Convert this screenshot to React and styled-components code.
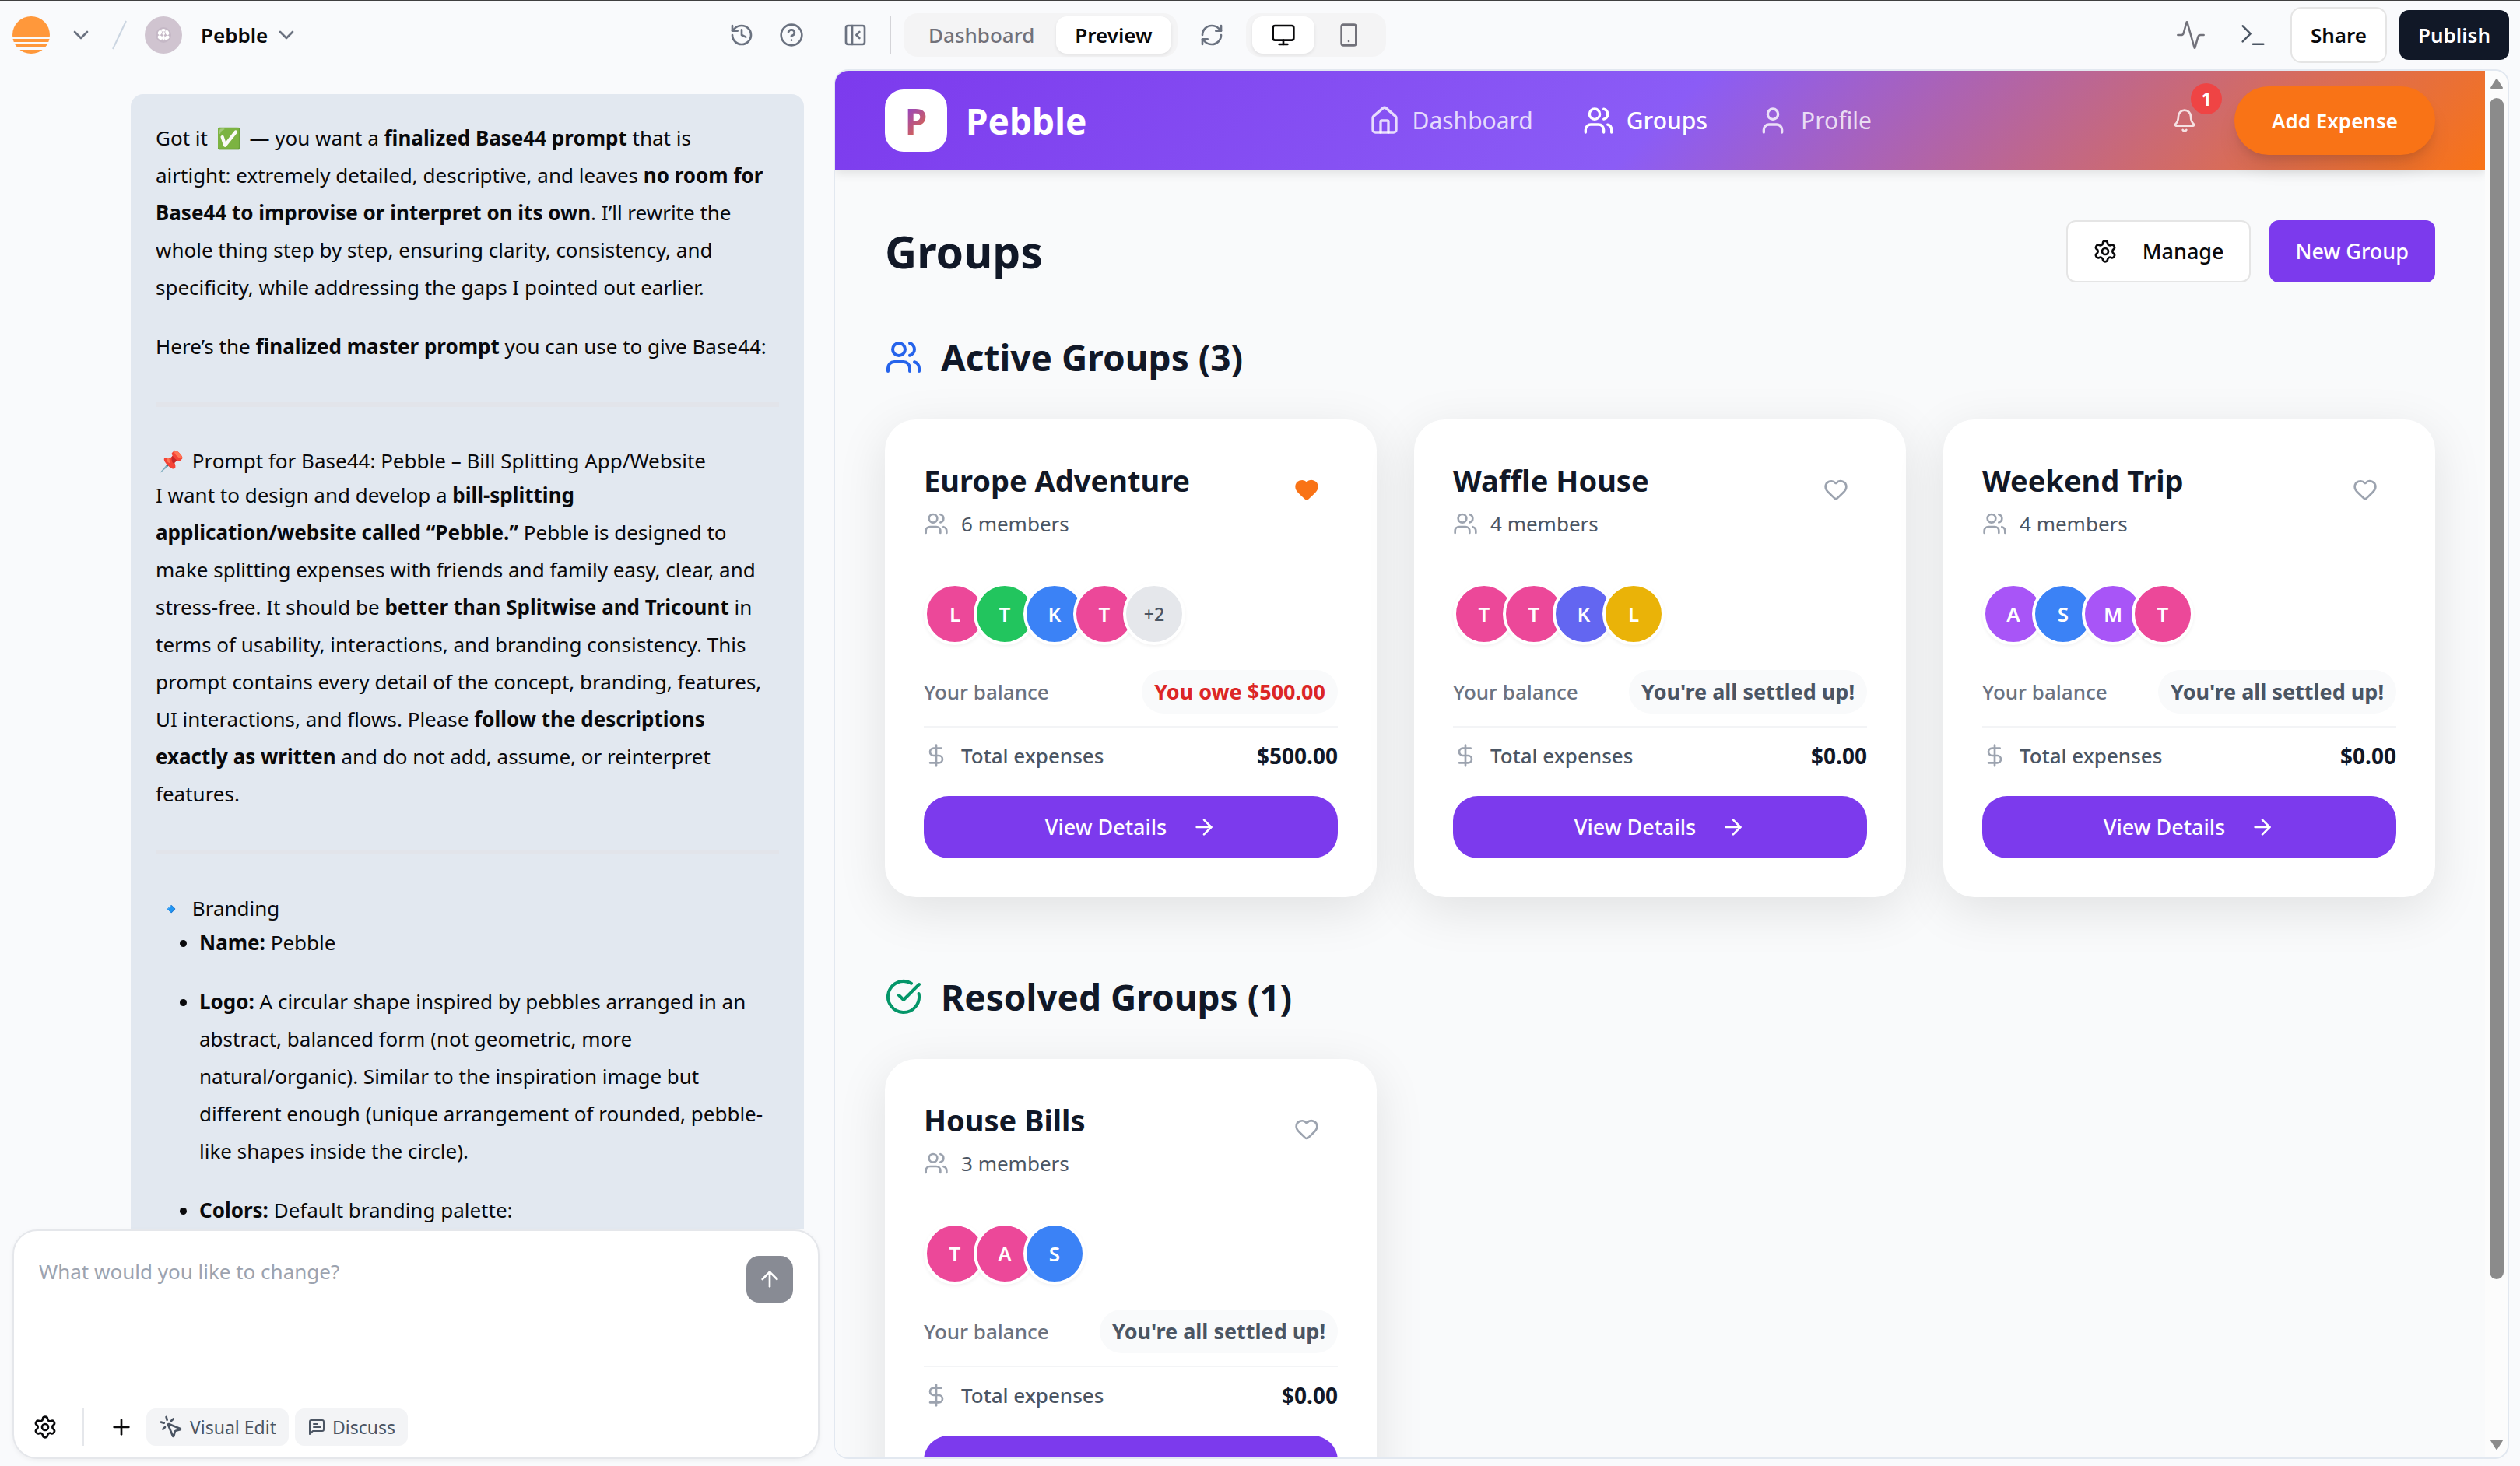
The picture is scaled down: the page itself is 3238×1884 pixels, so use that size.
import React from "react";
import styled, { createGlobalStyle, css } from "styled-components";
import {
  Activity,
  ArrowRight,
  ArrowUp,
  Bell,
  ChevronDown,
  CircleCheckBig,
  CircleHelp,
  DollarSign,
  Heart,
  History,
  House,
  Monitor,
  MousePointerClick,
  PanelLeftClose,
  Plus,
  RefreshCw,
  Settings,
  Smartphone,
  Terminal,
  User,
  Users,
} from "lucide-react";

const GlobalStyle = createGlobalStyle`
  * {
    box-sizing: border-box;
  }
  body {
    margin: 0;
    background: #f9fafc;
    color: #09090b;
    font-family: "Noto Sans", "Open Sans", sans-serif;
    font-size: 26px;
    line-height: 40px;
  }
  h1, h2, h3, p, ul {
    margin: 0;
    padding: 0;
  }
  button, textarea {
    font: inherit;
    color: inherit;
    border: 0;
    padding: 0;
    background: none;
  }
  button {
    cursor: pointer;
  }
  a {
    color: inherit;
    text-decoration: none;
  }
  svg {
    flex-shrink: 0;
  }
`;

/* ---------- shell ---------- */

const Page = styled.div`
  display: flex;
  flex-direction: column;
  height: 100vh;
  overflow: hidden;
`;

const Columns = styled.div`
  display: grid;
  grid-template-columns: minmax(0, 1072fr) minmax(0, 2166fr);
`;

const TopBar = styled(Columns)`
  flex-shrink: 0;
  height: 89px;
  border-top: 1px solid #404040;
`;

const Body = styled(Columns)`
  flex: 1;
  min-height: 0;
`;

const BarSide = styled.div`
  display: flex;
  align-items: center;
`;

const BarLeft = styled(BarSide)`
  padding: 0 39px 0 16px;
`;

const BarRight = styled(BarSide)`
  padding: 0 14px 0 11px;
`;

const Spacer = styled.div`
  flex: 1;
`;

const IconButton = styled.button`
  display: flex;
  align-items: center;
  justify-content: center;
  width: ${(p) => p.$size || 32}px;
  height: ${(p) => p.$size || 32}px;
  color: ${(p) => p.$color || "#6b7280"};
`;

const HelpButton = styled(IconButton)`
  margin-left: 32px;
`;

const HomeLink = styled.a`
  display: flex;
  margin-right: 24px;
`;

const Slash = styled.svg`
  margin: 0 20px;
`;

const ProjectName = styled.button`
  display: flex;
  align-items: center;
  gap: 8px;
  font-weight: 600;
`;

const NameLabel = styled.span`
  padding-left: 24px;
`;

const Divider = styled.span`
  width: 2px;
  height: 48px;
  background: ${(p) => p.$color || "#d4d4d8"};
`;

const BarDivider = styled(Divider)`
  margin: 0 16px 0 28px;
`;

const Segment = styled.div`
  display: flex;
  align-items: center;
  gap: 4px;
  height: 56px;
  padding: 4px 8px;
  border-radius: 18px;
  background: #f4f4f5;
`;

const SegmentButton = styled.button`
  display: flex;
  align-items: center;
  justify-content: center;
  height: 48px;
  padding: 0 24px;
  border-radius: 14px;
  font-weight: 500;
  color: #71717a;
  ${(p) =>
    p.$active &&
    css`
      color: #09090b;
      background: #ffffff;
      box-shadow: 0 2px 4px rgba(0, 0, 0, 0.08);
      font-weight: 600;
    `}
`;

const RefreshButton = styled(IconButton)`
  margin: 0 28px;
`;

const BarActions = styled.div`
  display: flex;
  align-items: center;
  gap: 40px;
  margin-right: 28px;
`;

const ShareButton = styled.button`
  height: 72px;
  padding: 0 24px;
  border: 2px solid #e5e5e5;
  border-radius: 14px;
  background: #ffffff;
  font-weight: 600;
`;

const PublishButton = styled.button`
  height: 64px;
  margin-left: 16px;
  padding: 0 24px;
  border-radius: 12px;
  background: #111827;
  color: #ffffff;
  font-weight: 600;
`;

/* ---------- chat ---------- */

const ChatColumn = styled.section`
  display: flex;
  flex-direction: column;
  min-height: 0;
`;

const ChatScroll = styled.div`
  flex: 1;
  min-height: 0;
  overflow: hidden;
  padding: 32px 39px 0 168px;
`;

const Bubble = styled.div`
  padding: 32px;
  border-radius: 16px;
  background: #e2e8f0;
  color: #09090b;
  line-height: 48px;
`;

const Paragraph = styled.p`
  padding-right: 12px;

  & + & {
    margin-top: 28px;
  }
`;

const BubbleHeading = styled.h1`
  font-size: 26px;
  font-weight: 400;
  line-height: 40px;
`;

const Rule = styled.hr`
  height: 6px;
  margin: 48px 0 49px;
  border: 0;
  background: #e2e4ea;
`;

const Emoji = styled.span`
  display: inline-block;
  width: 40px;
  text-align: center;
`;

const List = styled.ul`
  padding-left: 56px;

  li + li {
    margin-top: 28px;
  }
`;

const Composer = styled.form`
  display: flex;
  flex-direction: column;
  flex-shrink: 0;
  margin: 0 19px 9px 16px;
  padding: 32px 32px 15px;
  border: 2px solid #e5e7eb;
  border-radius: 32px;
  background: #ffffff;
  box-shadow: 0 2px 6px rgba(0, 0, 0, 0.05);
`;

const ComposerTop = styled.div`
  display: flex;
  align-items: flex-start;
  height: 196px;
`;

const PromptInput = styled.textarea`
  flex: 1;
  height: 160px;
  resize: none;
  outline: none;

  &::placeholder {
    color: #9ca3af;
  }
`;

const SendButton = styled.button`
  display: flex;
  align-items: center;
  justify-content: center;
  width: 60px;
  height: 60px;
  border-radius: 16px;
  background: #888b94;
  color: #ffffff;
`;

const Tools = styled.div`
  display: flex;
  align-items: center;
  margin-left: -8px;
`;

const ToolDivider = styled(Divider)`
  margin: 0 32px;
`;

const ToolButton = styled.button`
  display: flex;
  align-items: center;
  gap: 8px;
  height: 48px;
  margin-left: ${(p) => p.$gap}px;
  padding: 0 16px;
  border-radius: 12px;
  background: #f3f4f6;
  color: #4b5563;
  font-size: 23px;
`;

/* ---------- preview ---------- */

const Preview = styled.section`
  display: flex;
  min-height: 0;
  margin: 0 14px 9px 0;
  border: 2px solid #e2e8f0;
  border-left-width: 1px;
  border-radius: 18px;
  overflow: hidden;
`;

const AppView = styled.div`
  flex: 1;
  min-width: 0;
  overflow: hidden;
  background: #f9fafb;
`;

const Scrollbar = styled.div`
  display: flex;
  flex-direction: column;
  align-items: center;
  width: 29px;
  padding: 9px 0;
  background: #fcfcfc;
`;

const Track = styled.div`
  flex: 1;
  width: 18px;
  padding: 12px 0 18px;
`;

const Thumb = styled.div`
  height: 89%;
  border-radius: 9px;
  background: #8b8b8b;
`;

const AppHeader = styled.header`
  display: flex;
  align-items: center;
  justify-content: space-between;
  height: 128px;
  padding: 0 64px;
  background: linear-gradient(135deg, #7c3aed 0%, #8b5cf6 50%, #f97316 100%);
  box-shadow: 0 4px 12px rgba(0, 0, 0, 0.1);
  color: #ffffff;
`;

const Brand = styled.a`
  display: flex;
  align-items: center;
  gap: 24px;
  font-size: 46px;
  font-weight: 700;
  line-height: 64px;
`;

const BrandTile = styled.span`
  display: flex;
  align-items: center;
  justify-content: center;
  width: 80px;
  height: 80px;
  border-radius: 24px;
  background: #ffffff;
`;

const BrandLetter = styled.span`
  background: linear-gradient(135deg, #7c3aed, #f97316);
  background-clip: text;
  color: transparent;
`;

const Nav = styled.nav`
  display: flex;
  gap: 64px;
`;

const NavLink = styled.a`
  display: flex;
  align-items: center;
  gap: 16px;
  font-size: 30px;
  font-weight: ${(p) => (p.$active ? 500 : 400)};
  color: ${(p) => (p.$active ? "#ffffff" : "rgba(255, 255, 255, 0.8)")};
`;

const HeaderActions = styled.div`
  display: flex;
  align-items: center;
  gap: 24px;
`;

const BellButton = styled(IconButton)`
  position: relative;
`;

const Badge = styled.span`
  position: absolute;
  top: -8px;
  right: -8px;
  width: 40px;
  height: 40px;
  border-radius: 50%;
  background: #ef4444;
  color: #ffffff;
  font-size: 23px;
  font-weight: 700;
`;

const AddButton = styled.button`
  height: 88px;
  padding: 0 48px;
  border-radius: 44px;
  background: #f97316;
  box-shadow: 0 20px 30px -6px rgba(0, 0, 0, 0.1), 0 8px 12px -4px rgba(0, 0, 0, 0.1);
  font-weight: 600;
`;

const Main = styled.main`
  padding: 64px;
  color: #111827;
`;

const TitleRow = styled.div`
  display: flex;
  align-items: center;
  gap: 24px;
`;

const PageTitle = styled.h1`
  flex: 1;
  font-size: 57px;
  font-weight: 700;
  line-height: 80px;
`;

const ActionButton = styled.button`
  display: flex;
  align-items: center;
  gap: 32px;
  height: 80px;
  padding: 0 32px;
  border: 2px solid ${(p) => (p.$primary ? "#7c3aed" : "#e5e5e5")};
  border-radius: 12px;
  background: ${(p) => (p.$primary ? "#7c3aed" : "#ffffff")};
  color: ${(p) => (p.$primary ? "#ffffff" : "#09090b")};
  font-size: 27px;
  font-weight: 500;
`;

const Section = styled.section`
  margin-top: ${(p) => p.$top}px;
`;

const SectionTitle = styled.h2`
  display: flex;
  align-items: center;
  gap: 24px;
  margin-bottom: 48px;
  font-size: 46px;
  font-weight: 700;
  line-height: 64px;

  svg {
    color: ${(p) => p.$accent};
  }
`;

const CardGrid = styled.div`
  display: grid;
  grid-template-columns: repeat(3, minmax(0, 1fr));
  gap: 48px;
`;

const Card = styled.article`
  padding: 50px;
  border-radius: 40px;
  background: #ffffff;
  box-shadow: 0 16px 64px rgba(0, 0, 0, 0.1);
`;

const CardHead = styled.div`
  display: flex;
  align-items: flex-start;
  justify-content: space-between;
  margin-bottom: 56px;
`;

const CardTitle = styled.h3`
  margin-bottom: 8px;
  font-size: 38px;
  font-weight: 700;
  line-height: 56px;
`;

const IconText = styled.span`
  display: flex;
  align-items: center;
  gap: 16px;
  color: #4b5563;
  font-weight: ${(p) => p.$weight || 400};

  svg {
    color: #9ca3af;
  }
`;

const Avatars = styled.div`
  display: flex;
  margin-bottom: 32px;
`;

const Avatar = styled.span`
  display: flex;
  align-items: center;
  justify-content: center;
  width: 80px;
  height: 80px;
  border: 4px solid #ffffff;
  border-radius: 50%;
  background: ${(p) => p.$color};
  box-shadow: 0 2px 4px rgba(0, 0, 0, 0.05);
  color: #ffffff;
  font-weight: 600;

  & + & {
    margin-left: -16px;
  }
`;

const MoreAvatar = styled(Avatar)`
  color: #4b5563;
  font-size: 23px;
  font-weight: 500;
`;

const Row = styled.div`
  display: flex;
  align-items: center;
  justify-content: space-between;
`;

const BalanceRow = styled(Row)`
  padding-bottom: 16px;
  border-bottom: 2px solid #f3f4f6;
  color: #6b7280;
  font-weight: 500;
`;

const Balance = styled.span`
  padding: 8px 16px;
  border-radius: 28px;
  background: #f9fafb;
  color: ${(p) => (p.$owed ? "#dc2626" : "#4b5563")};
  font-size: 27px;
  font-weight: 700;
`;

const TotalRow = styled(Row)`
  padding: 16px 0 32px;
`;

const Amount = styled.span`
  font-size: 28px;
  font-weight: 700;
`;

const DetailsButton = styled.button`
  display: flex;
  align-items: center;
  justify-content: center;
  gap: 32px;
  width: 100%;
  height: 80px;
  border-radius: 32px;
  background: #7c3aed;
  color: #ffffff;
  font-size: 27px;
  font-weight: 500;
`;

const PINK = "#ec4899";
const BLUE = "#3b82f6";
const PURPLE = "#a855f7";

const activeGroups = [
  {
    name: "Europe Adventure",
    members: 6,
    avatars: [["L", PINK], ["T", "#22c55e"], ["K", BLUE], ["T", PINK]],
    more: 2,
    owed: "$500.00",
    total: "$500.00",
    favorite: true,
  },
  {
    name: "Waffle House",
    members: 4,
    avatars: [["T", PINK], ["T", PINK], ["K", "#6366f1"], ["L", "#eab308"]],
    total: "$0.00",
  },
  {
    name: "Weekend Trip",
    members: 4,
    avatars: [["A", PURPLE], ["S", BLUE], ["M", PURPLE], ["T", PINK]],
    total: "$0.00",
  },
];

const resolvedGroups = [
  {
    name: "House Bills",
    members: 3,
    avatars: [["T", PINK], ["A", PINK], ["S", BLUE]],
    total: "$0.00",
  },
];

const SunLogo = () => (
  <svg width="48" height="48" viewBox="0 0 48 48" aria-hidden="true">
    <clipPath id="sun">
      <circle cx="24" cy="24" r="24" />
    </clipPath>
    <g clipPath="url(#sun)" fill="#ff983b">
      <rect width="48" height="26" />
      <rect y="29" width="48" height="4" />
      <rect y="36" width="48" height="4" />
      <rect y="43" width="48" height="5" />
    </g>
  </svg>
);

const PebbleLogo = () => (
  <svg width="48" height="48" viewBox="0 0 48 48" aria-hidden="true">
    <circle cx="24" cy="24" r="24" fill="#d0c4d0" />
    <circle cx="24" cy="24" r="10" fill="#c5b8c6" />
    <g fill="#ffffff">
      <ellipse cx="24" cy="17.8" rx="2.8" ry="1.9" />
      <ellipse cx="19.4" cy="21" rx="2.4" ry="3" transform="rotate(25 19.4 21)" />
      <ellipse cx="24.2" cy="22" rx="1.9" ry="1.9" />
      <ellipse cx="28.8" cy="21" rx="2.3" ry="3.1" transform="rotate(-20 28.8 21)" />
      <ellipse cx="19.8" cy="27.2" rx="3.3" ry="2.5" transform="rotate(35 19.8 27.2)" />
      <ellipse cx="28.4" cy="27.4" rx="3.4" ry="2.4" transform="rotate(-35 28.4 27.4)" />
      <ellipse cx="24" cy="27.6" rx="1.6" ry="3.6" />
    </g>
  </svg>
);

const DiscussIcon = () => (
  <svg
    width="24"
    height="24"
    viewBox="0 0 24 24"
    fill="none"
    stroke="currentColor"
    strokeWidth="2"
    strokeLinecap="round"
    strokeLinejoin="round"
    aria-hidden="true"
  >
    <path d="M21 15a2 2 0 0 1-2 2H7l-4 4V5a2 2 0 0 1 2-2h14a2 2 0 0 1 2 2z" />
    <path d="M13 8H8" />
    <path d="M17 12H8" />
  </svg>
);

const ScrollArrow = ({ down }) => (
  <svg width="18" height="14" viewBox="0 0 18 14" aria-hidden="true">
    <path
      d={down ? "M2 1h14L9 12z" : "M2 13h14L9 2z"}
      fill="#8b8b8b"
      stroke="#8b8b8b"
      strokeWidth="2"
      strokeLinejoin="round"
    />
  </svg>
);

const GroupCard = ({ group }) => (
  <Card>
    <CardHead>
      <div>
        <CardTitle>{group.name}</CardTitle>
        <IconText>
          <Users size={32} />
          {group.members} members
        </IconText>
      </div>
      <IconButton
        $size={80}
        $color={group.favorite ? "#f97316" : "#9ca3af"}
        aria-label={`Favorite ${group.name}`}
      >
        <Heart size={32} fill={group.favorite ? "currentColor" : "none"} />
      </IconButton>
    </CardHead>
    <Avatars>
      {group.avatars.map(([letter, color], i) => (
        <Avatar key={i} $color={color}>
          {letter}
        </Avatar>
      ))}
      {group.more && <MoreAvatar $color="#e5e7eb">+{group.more}</MoreAvatar>}
    </Avatars>
    <BalanceRow>
      Your balance
      <Balance $owed={group.owed}>
        {group.owed ? `You owe ${group.owed}` : "You're all settled up!"}
      </Balance>
    </BalanceRow>
    <TotalRow>
      <IconText $weight={500}>
        <DollarSign size={32} />
        Total expenses
      </IconText>
      <Amount>{group.total}</Amount>
    </TotalRow>
    <DetailsButton>
      View Details
      <ArrowRight size={32} />
    </DetailsButton>
  </Card>
);

const EditorBar = () => (
  <TopBar as="header">
    <BarLeft>
      <HomeLink href="#" aria-label="Home">
        <SunLogo />
      </HomeLink>
      <IconButton aria-label="Workspace menu">
        <ChevronDown size={32} />
      </IconButton>
      <Slash width="26" height="40" viewBox="0 0 26 40" aria-hidden="true">
        <path d="M5 38 22 2" stroke="#cbd5e1" strokeWidth="2" />
      </Slash>
      <PebbleLogo />
      <ProjectName>
        <NameLabel>Pebble</NameLabel>
        <ChevronDown size={32} color="#6b7280" />
      </ProjectName>
      <Spacer />
      <IconButton aria-label="History">
        <History size={32} />
      </IconButton>
      <HelpButton aria-label="Help">
        <CircleHelp size={32} />
      </HelpButton>
    </BarLeft>
    <BarRight>
      <IconButton aria-label="Close panel">
        <PanelLeftClose size={32} />
      </IconButton>
      <BarDivider />
      <Segment>
        <SegmentButton>Dashboard</SegmentButton>
        <SegmentButton $active>Preview</SegmentButton>
      </Segment>
      <RefreshButton aria-label="Refresh">
        <RefreshCw size={32} />
      </RefreshButton>
      <Segment>
        <SegmentButton $active aria-label="Desktop">
          <Monitor size={32} />
        </SegmentButton>
        <SegmentButton aria-label="Mobile">
          <Smartphone size={32} />
        </SegmentButton>
      </Segment>
      <Spacer />
      <BarActions>
        <IconButton $size={40} $color="#71717a" aria-label="Activity">
          <Activity size={40} strokeWidth={1.5} />
        </IconButton>
        <IconButton $size={40} $color="#4b5563" aria-label="Console">
          <Terminal size={40} strokeWidth={1.5} />
        </IconButton>
      </BarActions>
      <ShareButton>Share</ShareButton>
      <PublishButton>Publish</PublishButton>
    </BarRight>
  </TopBar>
);

const Chat = () => (
  <ChatColumn>
    <ChatScroll>
      <Bubble>
        <Paragraph>
          Got it <Emoji>✅</Emoji> — you want a <b>finalized Base44 prompt</b> that is airtight:
          extremely detailed, descriptive, and leaves{" "}
          <b>no room for Base44 to improvise or interpret on its own</b>. I’ll rewrite the whole
          thing step by step, ensuring clarity, consistency, and specificity, while addressing
          the gaps I pointed out earlier.
        </Paragraph>
        <Paragraph>
          Here’s the <b>finalized master prompt</b> you can use to give Base44:
        </Paragraph>
        <Rule />
        <BubbleHeading>
          <Emoji>📌</Emoji> Prompt for Base44: Pebble – Bill Splitting App/Website
        </BubbleHeading>
        <Paragraph>
          I want to design and develop a <b>bill-splitting application/website called “Pebble.”</b>{" "}
          Pebble is designed to make splitting expenses with friends and family easy, clear, and
          stress-free. It should be <b>better than Splitwise and Tricount</b> in terms of
          usability, interactions, and branding consistency. This prompt contains every detail of
          the concept, branding, features, UI interactions, and flows. Please{" "}
          <b>follow the descriptions exactly as written</b> and do not add, assume, or reinterpret
          features.
        </Paragraph>
        <Rule />
        <BubbleHeading as="h2">
          <Emoji>🔹</Emoji> Branding
        </BubbleHeading>
        <List>
          <li>
            <b>Name:</b> Pebble
          </li>
          <li>
            <b>Logo:</b> A circular shape inspired by pebbles arranged in an abstract, balanced
            form (not geometric, more natural/organic). Similar to the inspiration image but
            different enough (unique arrangement of rounded, pebble-like shapes inside the
            circle).
          </li>
          <li>
            <b>Colors:</b> Default branding palette:
          </li>
        </List>
      </Bubble>
    </ChatScroll>
    <Composer onSubmit={(e) => e.preventDefault()}>
      <ComposerTop>
        <PromptInput aria-label="Message" placeholder="What would you like to change?" />
        <SendButton aria-label="Send">
          <ArrowUp size={32} />
        </SendButton>
      </ComposerTop>
      <Tools>
        <IconButton type="button" $color="#09090b" aria-label="Settings">
          <Settings size={32} />
        </IconButton>
        <ToolDivider $color="#e5e7eb" />
        <IconButton type="button" $color="#09090b" aria-label="Attach">
          <Plus size={32} />
        </IconButton>
        <ToolButton type="button" $gap={16}>
          <MousePointerClick size={32} />
          Visual Edit
        </ToolButton>
        <ToolButton type="button" $gap={8}>
          <DiscussIcon />
          Discuss
        </ToolButton>
      </Tools>
    </Composer>
  </ChatColumn>
);

const PebbleApp = () => (
  <Preview>
    <AppView>
      <AppHeader>
        <Brand href="#">
          <BrandTile>
            <BrandLetter>P</BrandLetter>
          </BrandTile>
          Pebble
        </Brand>
        <Nav>
          <NavLink href="#dashboard">
            <House size={40} />
            Dashboard
          </NavLink>
          <NavLink href="#groups" $active>
            <Users size={40} />
            Groups
          </NavLink>
          <NavLink href="#profile">
            <User size={40} />
            Profile
          </NavLink>
        </Nav>
        <HeaderActions>
          <BellButton $size={80} $color="rgba(255, 255, 255, 0.8)" aria-label="Notifications">
            <Bell size={32} />
            <Badge>1</Badge>
          </BellButton>
          <AddButton>Add Expense</AddButton>
        </HeaderActions>
      </AppHeader>
      <Main>
        <TitleRow>
          <PageTitle>Groups</PageTitle>
          <ActionButton>
            <Settings size={32} />
            Manage
          </ActionButton>
          <ActionButton $primary>New Group</ActionButton>
        </TitleRow>
        <Section $top={64}>
          <SectionTitle $accent="#2563eb">
            <Users size={48} />
            Active Groups ({activeGroups.length})
          </SectionTitle>
          <CardGrid>
            {activeGroups.map((group) => (
              <GroupCard key={group.name} group={group} />
            ))}
          </CardGrid>
        </Section>
        <Section $top={96}>
          <SectionTitle $accent="#059669">
            <CircleCheckBig size={48} />
            Resolved Groups ({resolvedGroups.length})
          </SectionTitle>
          <CardGrid>
            {resolvedGroups.map((group) => (
              <GroupCard key={group.name} group={group} />
            ))}
          </CardGrid>
        </Section>
      </Main>
    </AppView>
    <Scrollbar aria-hidden="true">
      <ScrollArrow />
      <Track>
        <Thumb />
      </Track>
      <ScrollArrow down />
    </Scrollbar>
  </Preview>
);

const App = () => {
  return (
    <Page>
      <GlobalStyle />
      <EditorBar />
      <Body>
        <Chat />
        <PebbleApp />
      </Body>
    </Page>
  );
};

export default App;
